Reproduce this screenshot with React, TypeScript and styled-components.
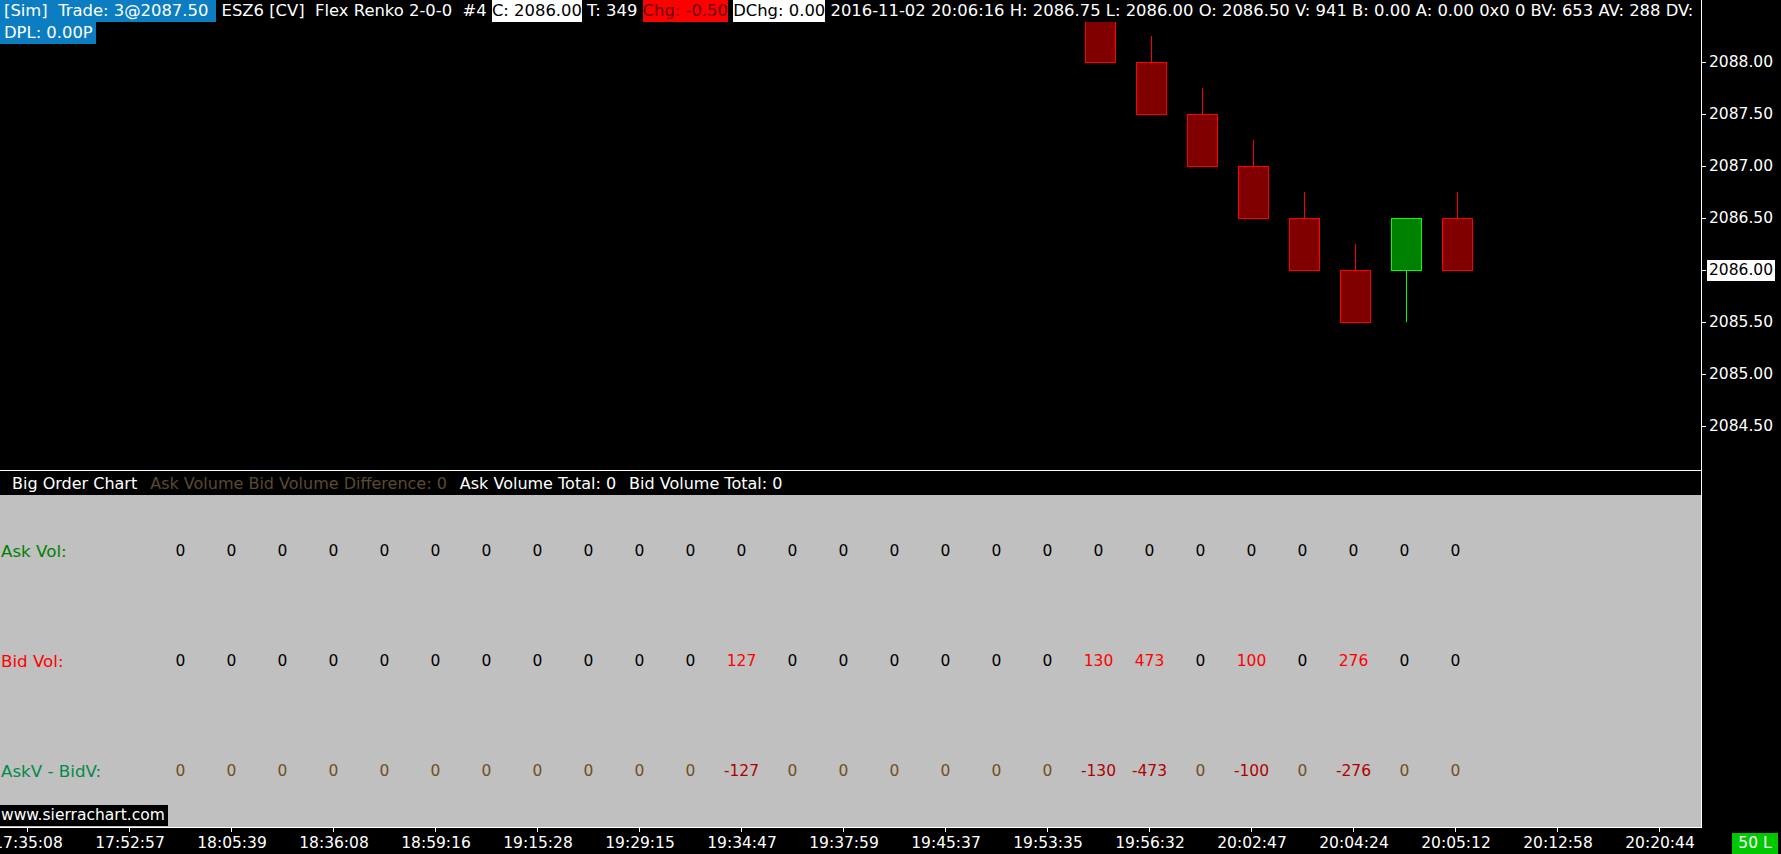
import React from "react";
import styled, { createGlobalStyle } from "styled-components";

const GlobalStyle = createGlobalStyle`
  html, body {
    margin: 0;
    padding: 0;
    background: #000;
  }
  body {
    overflow: hidden;
  }
`;

const Screen = styled.div`
  width: 1781px;
  height: 854px;
  background: #000;
  color: #fff;
  font-family: "DejaVu Sans", Verdana, sans-serif;
  font-size: 15.5px;
  display: flex;
  flex-direction: column;
  overflow: hidden;
`;

const Pane = styled.div<{ $height: number }>`
  display: flex;
  height: ${(p) => p.$height}px;
  flex-shrink: 0;
`;

const PlotArea = styled.div`
  position: relative;
  width: 1702px;
  box-sizing: border-box;
  border-right: 1px solid #fff;
  border-bottom: 1px solid #fff;
  overflow: hidden;
`;

const CandleCanvas = styled.svg`
  position: absolute;
  left: 0;
  top: 0;
`;

const Header = styled.div`
  position: absolute;
  left: 0;
  top: 0;
  z-index: 1;
  font-size: 16.4px;
`;

const HeaderLine = styled.div`
  display: flex;
  width: fit-content;
  height: 22px;
  line-height: 22px;
  white-space: pre;
`;

const Seg = styled.span<{ $bg?: string; $fg?: string; $pad?: string }>`
  background: ${(p) => p.$bg || "#000"};
  color: ${(p) => p.$fg || "#fff"};
  padding: ${(p) => p.$pad || "0"};
`;

const PriceScale = styled.div`
  flex: 1;
  display: flex;
  flex-direction: column;
  padding-top: 36px;
`;

const PriceRow = styled.div`
  height: 52px;
  display: flex;
  align-items: center;
  flex-shrink: 0;

  &::before {
    content: "";
    width: 4px;
    height: 1px;
    background: #fff;
  }
`;

const PriceLabel = styled.span<{ $current?: boolean }>`
  margin-left: ${(p) => (p.$current ? "1px" : "3px")};
  padding: ${(p) => (p.$current ? "0 2px" : "0")};
  line-height: 21px;
  background: ${(p) => (p.$current ? "#fff" : "transparent")};
  color: ${(p) => (p.$current ? "#000" : "#fff")};
`;

const SubPlot = styled.div`
  width: 1702px;
  box-sizing: border-box;
  border-right: 1px solid #fff;
  display: flex;
  flex-direction: column;
`;

const StudyHeader = styled.div`
  height: 24px;
  box-sizing: border-box;
  line-height: 20px;
  padding: 3px 0 0 12px;
  display: flex;
  gap: 13px;
  white-space: pre;
  flex-shrink: 0;
  font-size: 16px;
`;

const StudyText = styled.span<{ $fg?: string }>`
  color: ${(p) => p.$fg || "#fff"};
`;

const StudyGrid = styled.div`
  position: relative;
  flex: 1;
  background: #c0c0c0;
  display: grid;
  grid-template-columns: 155px repeat(26, 51px);
  grid-auto-rows: 110px;
  align-items: center;
  padding-top: 1px;
  box-sizing: border-box;
`;

const RowLabel = styled.div<{ $fg: string }>`
  color: ${(p) => p.$fg};
  padding-left: 1px;
  white-space: pre;
  font-size: 16.7px;
`;

const Cell = styled.div<{ $fg: string }>`
  color: ${(p) => p.$fg};
  text-align: center;
`;

const Watermark = styled.div`
  position: absolute;
  left: 0;
  bottom: 1px;
  height: 21px;
  line-height: 21px;
  padding: 0 3px 0 1px;
  background: #000;
  color: #fff;
`;

const BlackFill = styled.div`
  flex: 1;
  background: #000;
`;

const TimeAxis = styled.div`
  width: 1702px;
  box-sizing: border-box;
  border-top: 1px solid #fff;
  display: flex;
  overflow: hidden;
`;

const TimeLabel = styled.div<{ $first?: boolean }>`
  position: relative;
  width: 102px;
  flex-shrink: 0;
  margin-left: ${(p) => (p.$first ? "-23px" : "0")};
  text-align: center;
  padding-top: 5px;
  line-height: 20px;

  &::before {
    content: "";
    position: absolute;
    left: 50px;
    top: 0;
    width: 1px;
    height: 4px;
    background: #fff;
  }
`;

const TimeRight = styled.div`
  flex: 1;
  display: flex;
  justify-content: flex-end;
  align-items: flex-end;
`;

const LevelBadge = styled.div`
  width: 46px;
  height: 21px;
  line-height: 21px;
  margin-right: 3px;
  background: #00c800;
  color: #fff;
  text-align: center;
`;

type Candle = { o: number; c: number; h: number; l: number };

const CANDLES: Candle[] = [
  { o: 2088.5, c: 2088.0, h: 2088.5, l: 2088.0 },
  { o: 2088.0, c: 2087.5, h: 2088.25, l: 2087.5 },
  { o: 2087.5, c: 2087.0, h: 2087.75, l: 2087.0 },
  { o: 2087.0, c: 2086.5, h: 2087.25, l: 2086.5 },
  { o: 2086.5, c: 2086.0, h: 2086.75, l: 2086.0 },
  { o: 2086.0, c: 2085.5, h: 2086.25, l: 2085.5 },
  { o: 2086.0, c: 2086.5, h: 2086.5, l: 2085.5 },
  { o: 2086.5, c: 2086.0, h: 2086.75, l: 2086.0 },
];

const PRICES = ["2088.00", "2087.50", "2087.00", "2086.50", "2086.00", "2085.50", "2085.00", "2084.50"];

const BID = [0, 0, 0, 0, 0, 0, 0, 0, 0, 0, 0, 127, 0, 0, 0, 0, 0, 0, 130, 473, 0, 100, 0, 276, 0, 0];

const TIMES = [
  "17:35:08", "17:52:57", "18:05:39", "18:36:08", "18:59:16", "19:15:28", "19:29:15", "19:34:47",
  "19:37:59", "19:45:37", "19:53:35", "19:56:32", "20:02:47", "20:04:24", "20:05:12", "20:12:58", "20:20:44",
];

const yOf = (p: number) => Math.round(62 + (2088 - p) * 104);

const Candles = () => (
  <CandleCanvas width={1701} height={470}>
    {CANDLES.map((k, j) => {
      const left = 1085 + 51 * j;
      const up = k.c > k.o;
      const top = yOf(Math.max(k.o, k.c));
      const bottom = yOf(Math.min(k.o, k.c));
      const stroke = up ? "#00ff00" : "#ff0000";
      const fill = up ? "#008000" : "#800000";
      const wx = left + 15.5;
      return (
        <g key={j}>
          {k.h > Math.max(k.o, k.c) && (
            <line x1={wx} x2={wx} y1={yOf(k.h)} y2={top} stroke={stroke} strokeWidth={1} />
          )}
          {k.l < Math.min(k.o, k.c) && (
            <line x1={wx} x2={wx} y1={bottom} y2={yOf(k.l)} stroke={stroke} strokeWidth={1} />
          )}
          <rect x={left + 0.5} y={top + 0.5} width={30} height={bottom - top} fill={fill} stroke={stroke} strokeWidth={1} />
        </g>
      );
    })}
  </CandleCanvas>
);

const ROWS = [
  {
    label: "Ask Vol:",
    labelColor: "#008000",
    values: BID.map(() => 0),
    color: () => "#000",
  },
  {
    label: "Bid Vol:",
    labelColor: "#ff0000",
    values: BID,
    color: (v: number) => (v === 0 ? "#000" : "#ff0000"),
  },
  {
    label: "AskV - BidV:",
    labelColor: "#008a4a",
    values: BID.map((v) => -v),
    color: (v: number) => (v === 0 ? "#6e5020" : "#b00000"),
  },
];

export default function App() {
  return (
    <Screen>
      <GlobalStyle />
      <Pane $height={471}>
        <PlotArea>
          <Candles />
          <Header>
            <HeaderLine>
              <Seg $bg="#0b7dc0" $pad="0 8px 0 4px">[Sim]  Trade: 3@2087.50</Seg>
              <Seg> ESZ6 [CV]  Flex Renko 2-0-0  #4 </Seg>
              <Seg $bg="#fff" $fg="#000">C: 2086.00</Seg>
              <Seg> T: 349 </Seg>
              <Seg $bg="#ff0000" $fg="#6a0000">Chg: -0.50</Seg>
              <Seg> </Seg>
              <Seg $bg="#fff" $fg="#000">DChg: 0.00</Seg>
              <Seg> 2016-11-02 20:06:16 H: 2086.75 L: 2086.00 O: 2086.50 V: 941 B: 0.00 A: 0.00 0x0 0 BV: 653 AV: 288 DV:</Seg>
            </HeaderLine>
            <HeaderLine>
              <Seg $bg="#0b7dc0" $pad="0 3px 0 4px">DPL: 0.00P</Seg>
            </HeaderLine>
          </Header>
        </PlotArea>
        <PriceScale>
          {PRICES.map((p) => (
            <PriceRow key={p}>
              <PriceLabel $current={p === "2086.00"}>{p}</PriceLabel>
            </PriceRow>
          ))}
        </PriceScale>
      </Pane>

      <Pane $height={356}>
        <SubPlot>
          <StudyHeader>
            <StudyText>Big Order Chart</StudyText>
            <StudyText $fg="#5c4a30">Ask Volume Bid Volume Difference: 0</StudyText>
            <StudyText>Ask Volume Total: 0</StudyText>
            <StudyText>Bid Volume Total: 0</StudyText>
          </StudyHeader>
          <StudyGrid>
            {ROWS.map((r) => (
              <React.Fragment key={r.label}>
                <RowLabel $fg={r.labelColor}>{r.label}</RowLabel>
                {r.values.map((v, i) => (
                  <Cell key={i} $fg={r.color(v)}>
                    {v}
                  </Cell>
                ))}
              </React.Fragment>
            ))}
            <Watermark>www.sierrachart.com</Watermark>
          </StudyGrid>
        </SubPlot>
        <BlackFill />
      </Pane>

      <Pane $height={27}>
        <TimeAxis>
          {TIMES.map((t, i) => (
            <TimeLabel key={t} $first={i === 0}>
              {t}
            </TimeLabel>
          ))}
        </TimeAxis>
        <TimeRight>
          <LevelBadge>50 L</LevelBadge>
        </TimeRight>
      </Pane>
    </Screen>
  );
}
